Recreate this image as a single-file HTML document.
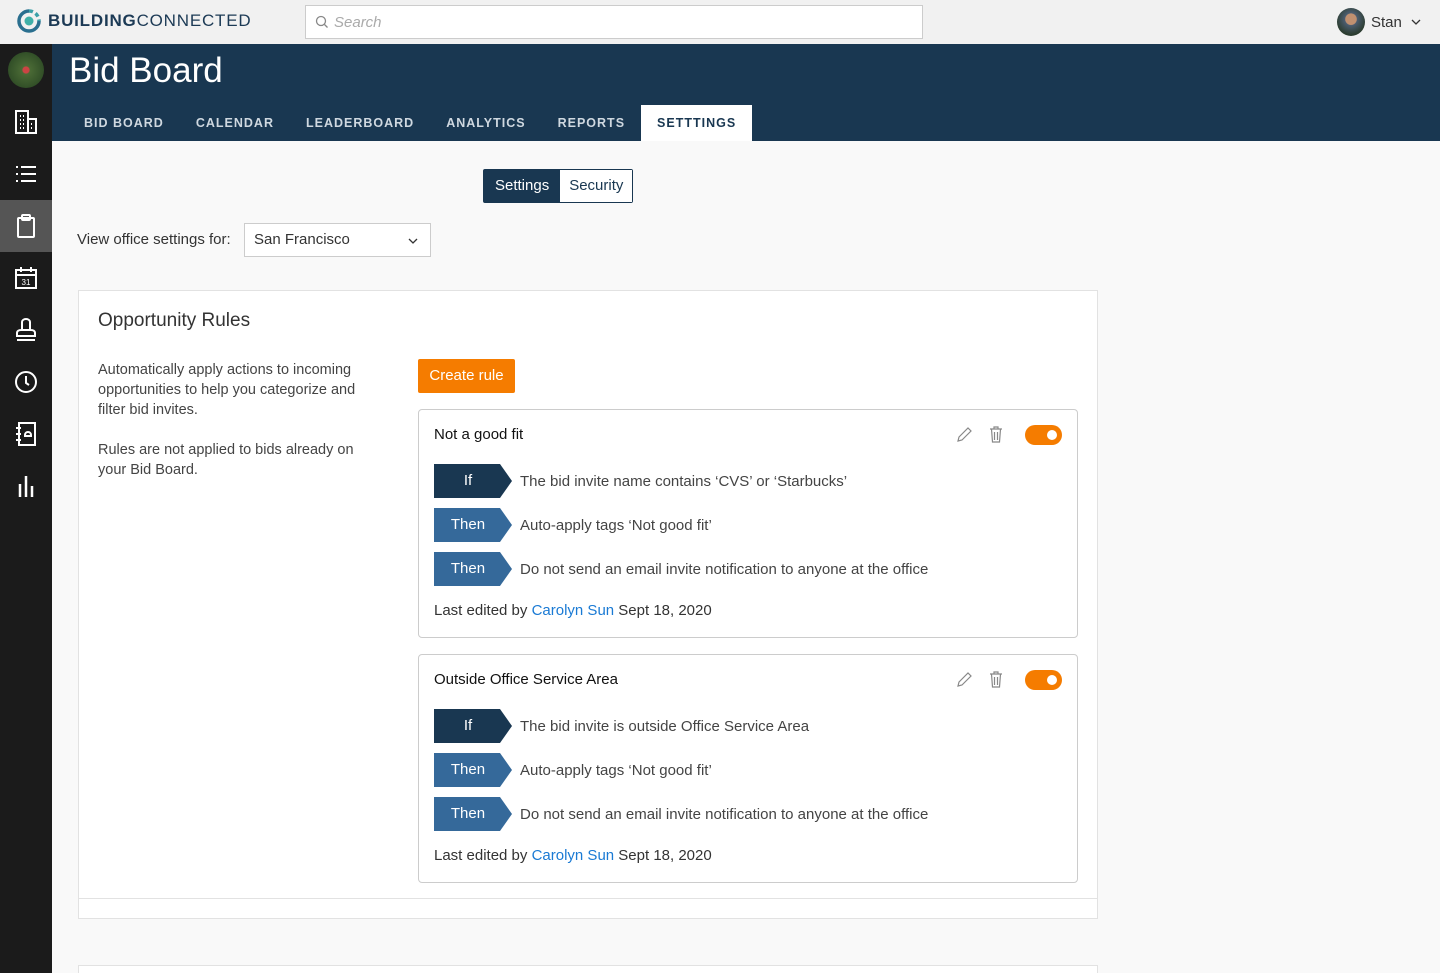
<!DOCTYPE html>
<html><head><meta charset="utf-8"><style>
*{box-sizing:border-box;margin:0;padding:0}
html,body{width:1440px;height:973px;overflow:hidden}
body{font-family:"Liberation Sans",sans-serif;background:#f9f9f9;position:relative;color:#222}
.top{position:absolute;left:0;top:0;width:1440px;height:44px;background:#f1f1f1}
.logo{position:absolute;left:17px;top:9px;display:flex;align-items:center}
.logo span{font-size:17px;letter-spacing:0.8px;color:#1c3a55;margin-left:7px}
.search{position:absolute;left:305px;top:5px;width:618px;height:34px;border:1px solid #ccc;background:#fff;font-size:15px;color:#aaa;font-style:italic;padding:8px 0 0 28px}
.user{position:absolute;left:1337px;top:8px;display:flex;align-items:center;font-size:15px;color:#333}
.av{width:28px;height:28px;border-radius:50%;background:radial-gradient(circle at 50% 40%,#c09070 25%,#4c5d70 28%,#2c3d30 70%);margin-right:6px}
.side{position:absolute;left:0;top:44px;width:52px;height:929px;background:#1b1b1b}
.side .it{position:absolute;left:0;width:52px;height:52px;display:flex;align-items:center;justify-content:center}
.hdr{position:absolute;left:52px;top:44px;width:1388px;height:97px;background:#193751}
.hdr h1{position:absolute;left:17px;top:7px;font-weight:normal;font-size:35px;color:#fff}
.tabs{position:absolute;left:16px;top:61px;display:flex}
.tabs div{height:36px;padding:0 16px;font-size:12.5px;letter-spacing:1px;color:#cfd8e0;line-height:36px;font-weight:bold}
.tabs .on{background:#fff;color:#193751}
.seg{position:absolute;left:483px;top:169px;height:34px;display:flex;border:1px solid #193751;border-radius:2px;font-size:15px}
.seg div{padding:0 9px;line-height:32px;background:#fff;color:#193751}
.seg .a{background:#193751;color:#fff;padding:0 11px}
.lbl{position:absolute;left:77px;top:231px;font-size:15px;color:#333}
.sel{position:absolute;left:244px;top:223px;width:187px;height:34px;border:1px solid #ccc;background:#fff;font-size:15px;padding:7px 0 0 9px;color:#333}
.card{position:absolute;left:78px;top:290px;width:1020px;height:609px;background:#fff;border:1px solid #e2e2e2}
.foot{position:absolute;left:78px;top:898px;width:1020px;height:21px;background:#fff;border:1px solid #e2e2e2}
.card2{position:absolute;left:78px;top:965px;width:1020px;height:8px;background:#fff;border:1px solid #e2e2e2;border-bottom:none}
.ttl{position:absolute;left:98px;top:310px;font-size:19px;color:#333}
.desc{position:absolute;left:98px;top:360px;width:285px;font-size:14.5px;line-height:20px;color:#444}
.btn{position:absolute;left:418px;top:359px;width:97px;height:34px;background:#f57c00;color:#fff;font-size:15px;line-height:34px;text-align:center;border-radius:2px}
.rule{position:absolute;left:418px;width:660px;height:229px;border:1px solid #ccc;border-radius:4px;background:#fff}
.rule .n{position:absolute;left:15px;top:16px;font-size:15px;color:#111}
.row{position:absolute;left:15px;height:34px;display:flex;align-items:center}
.chev{width:78px;height:34px;color:#fff;font-size:15px;text-align:center;line-height:34px;padding-right:10px;clip-path:polygon(0 0,66px 0,78px 50%,66px 100%,0 100%)}
.d{background:#193751}.l{background:#35699a}
.row span{margin-left:8px;font-size:15px;color:#444}
.ed{position:absolute;left:15px;top:192px;font-size:15px;color:#333}
.ed b{font-weight:normal;color:#1a7ad4}
.tog{position:absolute;left:606px;top:15px;width:37px;height:20px;border-radius:10px;background:#f57c00}
.tog:after{content:"";position:absolute;right:5px;top:5px;width:10px;height:10px;border-radius:50%;background:#fff}
.ic{position:absolute;top:15px}
</style></head><body>
<div class="top">
 <div class="logo"><svg width="24" height="24" viewBox="0 0 24 24"><path d="M12 2A10 10 0 1 0 22 12" fill="none" stroke="#2a6f8f" stroke-width="3.5"/><path d="M12 2A10 10 0 0 1 22 12" fill="none" stroke="#3aa0a8" stroke-width="3.5" stroke-dasharray="4 3"/><circle cx="12" cy="12" r="4.5" fill="#3fb0a8"/></svg><span><b>BUILDING</b>CONNECTED</span></div>
 <div class="search"><svg style="position:absolute;left:9px;top:9px" width="14" height="14" viewBox="0 0 14 14"><circle cx="6" cy="6" r="4.5" fill="none" stroke="#888" stroke-width="1.3"/><path d="M9.5 9.5l3 3" stroke="#888" stroke-width="1.3"/></svg>Search</div>
 <div class="user"><div class="av"></div>Stan <svg style="margin-left:9px" width="10" height="6" viewBox="0 0 10 6"><path d="M1 1l4 4 4-4" fill="none" stroke="#333" stroke-width="1.3"/></svg></div>
</div>
<div class="side">
 <div class="it" style="top:0"><div style="width:36px;height:36px;border-radius:50%;background:radial-gradient(circle,#c44 12%,#4a6a35 16%,#2d4a25 80%)"></div></div>
 <div class="it" style="top:52px"><svg width="24" height="26" viewBox="0 0 24 26" fill="none" stroke="#fff" stroke-width="2"><rect x="2" y="2" width="12" height="22"/><rect x="14" y="10" width="8" height="14"/><path d="M6 7h1M9 7h1M6 11h1M9 11h1M6 15h1M9 15h1M6 19h1M9 19h1M17 15h1M17 19h1"/></svg></div>
 <div class="it" style="top:104px"><svg width="22" height="18" viewBox="0 0 22 18" fill="none" stroke="#fff" stroke-width="2"><path d="M1 2h2M1 9h2M1 16h2M6 2h15M6 9h15M6 16h15"/></svg></div>
 <div class="it" style="top:156px;background:#555"><svg width="20" height="24" viewBox="0 0 20 24" fill="none" stroke="#fff" stroke-width="2"><rect x="2" y="4" width="16" height="19" rx="1"/><rect x="6" y="1" width="8" height="5" rx="1"/></svg></div>
 <div class="it" style="top:208px"><svg width="24" height="24" viewBox="0 0 24 24" fill="none" stroke="#fff" stroke-width="2"><rect x="2" y="4" width="20" height="18"/><path d="M2 9h20M7 1v5M17 1v5"/><text x="12" y="19" font-size="8" fill="#fff" stroke="none" text-anchor="middle" font-family="Liberation Sans">31</text></svg></div>
 <div class="it" style="top:260px"><svg width="24" height="24" viewBox="0 0 24 24" fill="none" stroke="#fff" stroke-width="2"><path d="M8 12V4a4 3 0 0 1 8 0v8M3 18v-3c0-2 2-3 4-3h10c2 0 4 1 4 3v3zM3 22h18"/></svg></div>
 <div class="it" style="top:312px"><svg width="24" height="24" viewBox="0 0 24 24" fill="none" stroke="#fff" stroke-width="2"><circle cx="12" cy="12" r="10"/><path d="M12 6v7l3 2"/></svg></div>
 <div class="it" style="top:364px"><svg width="22" height="26" viewBox="0 0 22 26" fill="none" stroke="#fff" stroke-width="2"><rect x="4" y="2" width="16" height="22"/><path d="M1 7h5M1 13h5M1 19h5M10 14a3 3 0 0 1 6 0v1h-6z"/></svg></div>
 <div class="it" style="top:416px"><svg width="20" height="24" viewBox="0 0 20 24" fill="none" stroke="#fff" stroke-width="2.5"><path d="M4 10v13M10 2v21M16 12v11"/></svg></div>
</div>
<div class="hdr"><h1>Bid Board</h1>
 <div class="tabs"><div>BID BOARD</div><div>CALENDAR</div><div>LEADERBOARD</div><div>ANALYTICS</div><div>REPORTS</div><div class="on">SETTTINGS</div></div>
</div>
<div class="seg"><div class="a">Settings</div><div>Security</div></div>
<div class="lbl">View office settings for:</div>
<div class="sel">San Francisco<svg style="position:absolute;right:12px;top:14px" width="10" height="6" viewBox="0 0 10 6"><path d="M1 1l4 4 4-4" fill="none" stroke="#333" stroke-width="1.3"/></svg></div>
<div class="card"></div><div class="foot"></div><div class="card2"></div>
<div class="ttl">Opportunity Rules</div>
<div class="desc">Automatically apply actions to incoming opportunities to help you categorize and filter bid invites.<br><br>Rules are not applied to bids already on your Bid Board.</div>
<div class="btn">Create rule</div>

<div class="rule" style="top:409px">
 <div class="n">Not a good fit</div>
 <svg class="ic" style="left:537px" width="16" height="18" viewBox="0 0 16 18" fill="none" stroke="#888" stroke-width="1.2"><path d="M2 16l1-4 9-9 3 3-9 9z"/></svg>
 <svg class="ic" style="left:570px" width="14" height="18" viewBox="0 0 14 18" fill="none" stroke="#888" stroke-width="1.2"><path d="M1 4h12M5 4V2h4v2M2.5 4l1 13h7l1-13M5.5 7v8M8.5 7v8"/></svg>
 <div class="tog"></div>
 <div class="row" style="top:54px"><div class="chev d">If</div><span>The bid invite name contains ‘CVS’ or ‘Starbucks’</span></div>
 <div class="row" style="top:98px"><div class="chev l">Then</div><span>Auto-apply tags ‘Not good fit’</span></div>
 <div class="row" style="top:142px"><div class="chev l">Then</div><span>Do not send an email invite notification to anyone at the office</span></div>
 <div class="ed">Last edited by <b>Carolyn Sun</b> Sept 18, 2020</div>
</div>
<div class="rule" style="top:654px">
 <div class="n">Outside Office Service Area</div>
 <svg class="ic" style="left:537px" width="16" height="18" viewBox="0 0 16 18" fill="none" stroke="#888" stroke-width="1.2"><path d="M2 16l1-4 9-9 3 3-9 9z"/></svg>
 <svg class="ic" style="left:570px" width="14" height="18" viewBox="0 0 14 18" fill="none" stroke="#888" stroke-width="1.2"><path d="M1 4h12M5 4V2h4v2M2.5 4l1 13h7l1-13M5.5 7v8M8.5 7v8"/></svg>
 <div class="tog"></div>
 <div class="row" style="top:54px"><div class="chev d">If</div><span>The bid invite is outside Office Service Area</span></div>
 <div class="row" style="top:98px"><div class="chev l">Then</div><span>Auto-apply tags ‘Not good fit’</span></div>
 <div class="row" style="top:142px"><div class="chev l">Then</div><span>Do not send an email invite notification to anyone at the office</span></div>
 <div class="ed">Last edited by <b>Carolyn Sun</b> Sept 18, 2020</div>
</div>
</body></html>
